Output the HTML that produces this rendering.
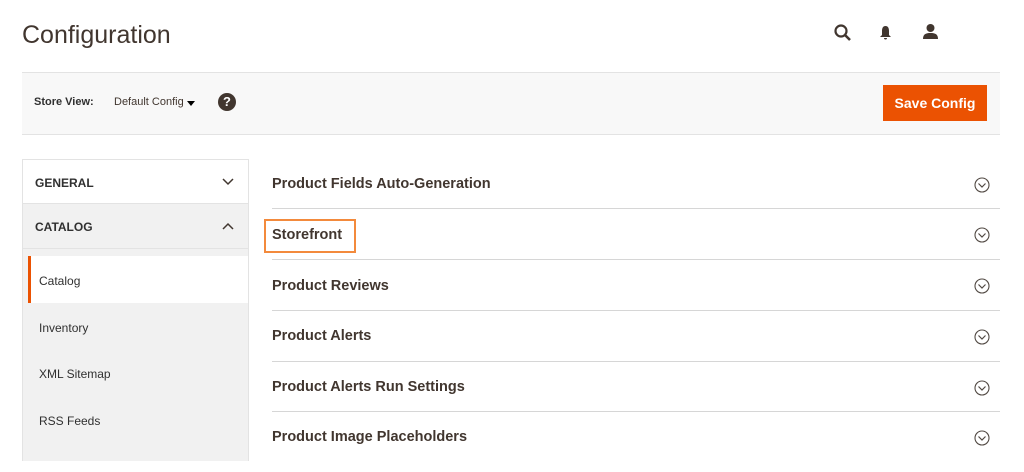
<!DOCTYPE html>
<html><head><style>
body{margin:0;width:1024px;height:460px;background:#fff;font-family:"Liberation Sans",sans-serif;color:#303030;position:relative;overflow:hidden}
.a{position:absolute}
h1{position:absolute;left:22px;top:21px;margin:0;font-weight:normal;font-size:25px;color:#41362f}
.bar{left:22px;top:72px;width:978px;height:61px;background:#f8f8f8;border-top:1px solid #e3e3e3;border-bottom:1px solid #e3e3e3}
.btn{left:883px;top:85px;width:104px;height:36px;background:#eb5202;color:#fff;font-weight:bold;font-size:14px;line-height:36px;text-align:center}
.side{left:22px;top:159px;width:225px;height:301px;border:1px solid #e3e3e3;border-bottom:none;background:#f1f1f1}
.row{position:absolute;left:0;width:225px;font-size:12px;font-weight:bold}
.sub{position:absolute;left:16px;font-size:12px;color:#303030}
.item{left:272px;width:728px;border-bottom:1px solid #d6d6d6;font-weight:bold;font-size:14.5px;color:#41362f}
.ci{position:absolute;right:10px}
</style></head><body>
<h1>Configuration</h1>
<svg class="a" style="left:834px;top:24px" width="18" height="18" viewBox="0 0 18 18"><circle cx="7" cy="7" r="5.5" fill="none" stroke="#41362f" stroke-width="2.2"/><path d="M11 11l5 5" stroke="#41362f" stroke-width="2.6"/></svg>
<svg class="a" style="left:879px;top:25px" width="13" height="16" viewBox="0 0 13 16"><path d="M6.5 1C3.5 1 3 4 3 6v4l-2 2h11l-2-2V6c0-2-.5-5-3.5-5z M5 13h3a1.5 1.5 0 0 1-3 0z" fill="#41362f"/></svg>
<svg class="a" style="left:922px;top:23px" width="17" height="17" viewBox="0 0 17 17"><circle cx="8.5" cy="5" r="4" fill="#41362f"/><path d="M1 16c0-5 3-6 7.5-6s7.5 1 7.5 6z" fill="#41362f"/></svg>
<div class="a bar"></div>
<div class="a" style="left:34px;top:96px;font-size:11px;font-weight:bold">Store View:</div>
<div class="a" style="left:114px;top:96px;font-size:11px;color:#41362f">Default Config</div>
<div class="a" style="left:187px;top:101px;border-left:4px solid transparent;border-right:4px solid transparent;border-top:5px solid #000"></div>
<div class="a" style="left:218px;top:93px;width:18px;height:18px;border-radius:50%;background:#41362f;color:#fff;font-weight:bold;font-size:13px;text-align:center;line-height:18px">?</div>
<div class="a btn">Save Config</div>
<div class="a side">
 <div class="row" style="top:0;height:43px;background:#fff;border-bottom:1px solid #e3e3e3"><span class="a" style="left:12px;top:16px">GENERAL</span><svg class="a" style="left:199px;top:18px" width="12" height="8" viewBox="0 0 12 8"><path d="M1 1l5 5 5-5" fill="none" stroke="#41362f" stroke-width="1.5"/></svg></div>
 <div class="row" style="top:44px;height:44px;background:#f1f1f1;border-bottom:1px solid #e3e3e3"><span class="a" style="left:12px;top:16px">CATALOG</span><svg class="a" style="left:199px;top:18px" width="12" height="8" viewBox="0 0 12 8"><path d="M1 7l5-5 5 5" fill="none" stroke="#41362f" stroke-width="1.5"/></svg></div>
 <div class="a" style="left:5px;top:96px;width:217px;height:47px;background:#fff;border-left:3px solid #eb5202"></div>
 <div class="sub" style="top:114px">Catalog</div>
 <div class="sub" style="top:161px">Inventory</div>
 <div class="sub" style="top:207px">XML Sitemap</div>
 <div class="sub" style="top:254px">RSS Feeds</div>
</div>
<svg width="0" height="0" style="position:absolute"><defs><g id="c"><circle cx="8" cy="8" r="7" fill="none" stroke="#514943" stroke-width="1.1"/><path d="M4.5 6.5l3.5 3.5 3.5-3.5" fill="none" stroke="#514943" stroke-width="1.2"/></g></defs></svg>
<div class="a item" style="top:159px;height:49px"><span class="a" style="left:0;top:17px">Product Fields Auto-Generation</span><svg class="ci" style="top:18px" width="16" height="16"><use href="#c"/></svg></div>
<div class="a item" style="top:209px;height:50px"><span class="a" style="left:0;top:18px">Storefront</span><svg class="ci" style="top:18px" width="16" height="16"><use href="#c"/></svg></div>
<div class="a" style="left:264px;top:219px;width:88px;height:30px;border:2px solid #f38a3c"></div>
<div class="a item" style="top:260px;height:50px"><span class="a" style="left:0;top:18px">Product Reviews</span><svg class="ci" style="top:18px" width="16" height="16"><use href="#c"/></svg></div>
<div class="a item" style="top:311px;height:50px"><span class="a" style="left:0;top:17px">Product Alerts</span><svg class="ci" style="top:18px" width="16" height="16"><use href="#c"/></svg></div>
<div class="a item" style="top:362px;height:49px"><span class="a" style="left:0;top:17px">Product Alerts Run Settings</span><svg class="ci" style="top:18px" width="16" height="16"><use href="#c"/></svg></div>
<div class="a item" style="top:412px;height:60px;border:none"><span class="a" style="left:0;top:17px">Product Image Placeholders</span><svg class="ci" style="top:18px" width="16" height="16"><use href="#c"/></svg></div>
</body></html>
